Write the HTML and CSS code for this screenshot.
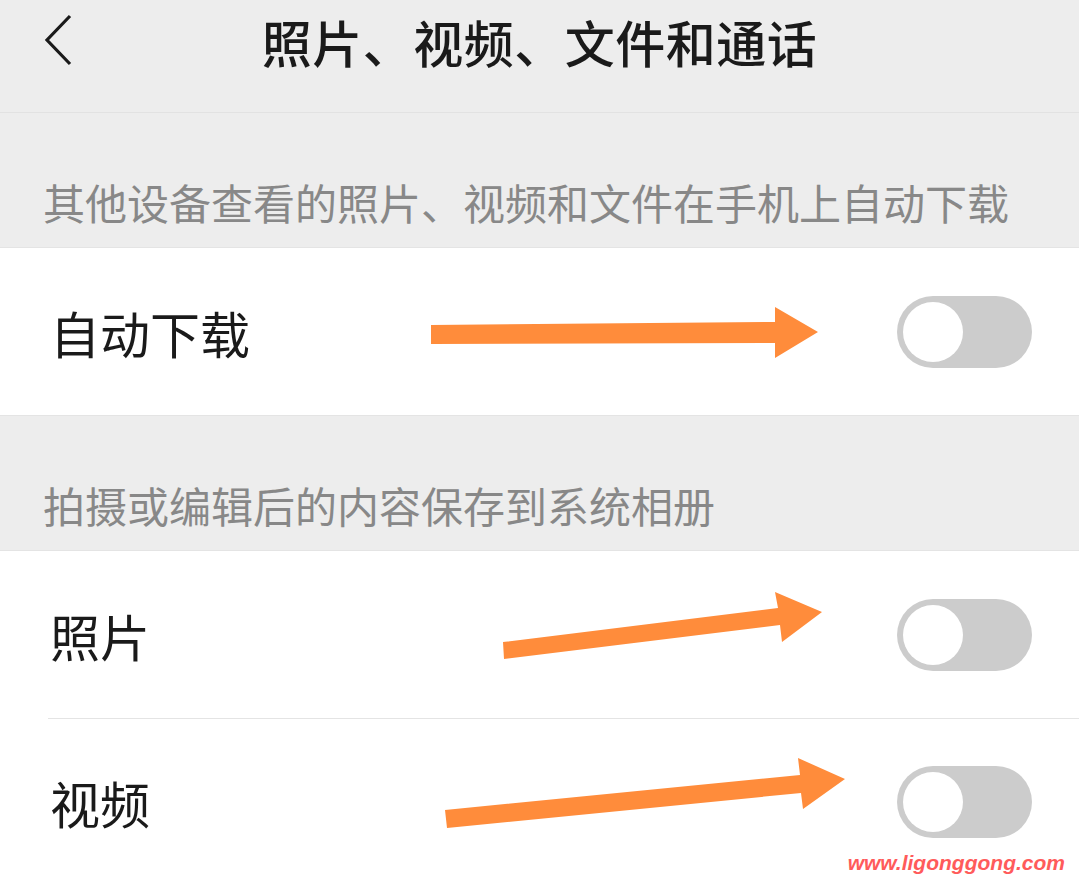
FILE: index.html
```html
<!DOCTYPE html>
<html>
	<head>
		<meta charset="UTF-8">
		<meta name="viewport" content="width=device-width,initial-scale=1">
		<title>照片、视频、文件和通话</title>
		<link rel="stylesheet" href="styles.css">
	</head>
	<body>
		<div id="wrap">
			<div class="header">
				<a class="back" href="#">
					<svg width="30" height="52" viewBox="0 0 30 52"><polyline points="27,2 4,26 27,50" fill="none" stroke="#1a1a1a" stroke-width="3.2"/></svg>
				</a>
				<h1 class="title">照片、视频、文件和通话</h1>
			</div>

			<div class="section-label">其他设备查看的照片、视频和文件在手机上自动下载</div>
			<div class="group">
				<div class="row">
					<span class="row-text">自动下载</span>
					<span class="switch"><span class="knob"></span></span>
				</div>
			</div>

			<div class="section-label">拍摄或编辑后的内容保存到系统相册</div>
			<div class="group last">
				<div class="row">
					<span class="row-text">照片</span>
					<span class="switch"><span class="knob"></span></span>
				</div>
				<div class="row">
					<span class="row-text">视频</span>
					<span class="switch"><span class="knob"></span></span>
				</div>
			</div>

			<!-- 标注箭头 -->
			<svg class="marks" width="1079" height="887" viewBox="0 0 1079 887">
				<polygon points="431,325 775,322 775,307 818,332 775,358 775,343 431,344"/>
				<polygon points="503,642 778,608 775,592 822,612 782,642 780,625 504,659"/>
				<polygon points="445,810 800,775 798,758 845,779 803,809 801,793 447,828"/>
			</svg>
			<div class="watermark">www.ligonggong.com</div>
		</div>
	</body>
</html>
```

FILE: styles.css
```css
body {
  margin: 0;
}

#wrap{
	position: relative;
	width: 1079px;
	height: 887px;
	overflow: hidden;
	display: flex;
	flex-direction: column;
	background: #ededed;
	font-family: "Noto Sans CJK SC", "Noto Sans", sans-serif;
}

.header{
	height: 112px;
	flex-shrink: 0;
	border-bottom: 1px solid #e2e2e2;
	display: flex;
	align-items: center;
	justify-content: center;
	position: relative;
}
.back{
	position: absolute;
	left: 43px;
	top: 14px;
	display: block;
}
.title{
	margin: 0;
	margin-top: -30px;
	font-size: 50px;
	font-weight: 500;
	color: #1a1a1a;
	letter-spacing: 0.5px;
}

.section-label{
	height: 134px;
	flex-shrink: 0;
	box-sizing: border-box;
	display: flex;
	align-items: flex-end;
	padding: 0 0 24px 43px;
	font-size: 42px;
	line-height: 42px;
	color: #888;
}

.group{
	flex-shrink: 0;
	background: #fff;
	border-top: 1px solid #e4e4e4;
	border-bottom: 1px solid #e4e4e4;
}
.group.last{
	border-bottom: 0;
	flex: 1 0 auto;
}
.row{
	height: 167px;
	display: flex;
	align-items: center;
	justify-content: space-between;
	padding: 0 47px 0 50px;
	box-sizing: border-box;
}
.row + .row{
	border-top: 1px solid #e4e4e4;
	margin-left: 48px;
	padding-left: 2px;
}
.row-text{
	font-size: 50px;
	color: #1a1a1a;
}

.switch{
	width: 135px;
	height: 72px;
	border-radius: 36px;
	background: #cccccc;
	box-sizing: border-box;
	padding: 6px;
	display: flex;
}
.knob{
	width: 60px;
	height: 60px;
	border-radius: 50%;
	background: #fff;
}

.marks{
	position: absolute;
	left: 0;
	top: 0;
	fill: #ff8c3b;
}
.watermark{
	position: absolute;
	right: 14px;
	bottom: 12px;
	font-family: "Liberation Sans", sans-serif;
	font-size: 21px;
	font-weight: bold;
	font-style: italic;
	color: #ff5b5b;
}
```
